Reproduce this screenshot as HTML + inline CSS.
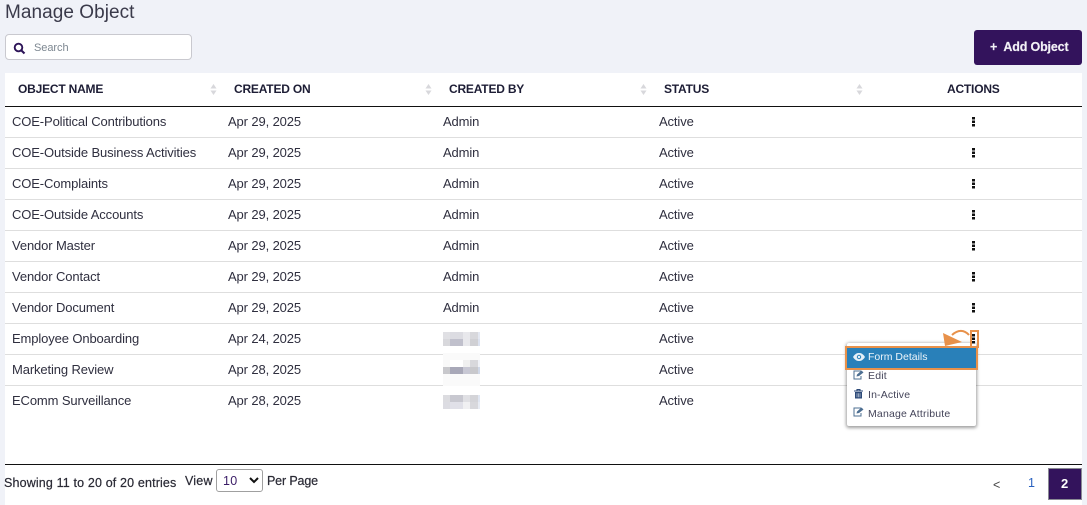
<!DOCTYPE html>
<html><head><meta charset="utf-8"><title>Manage Object</title>
<style>
*{box-sizing:border-box}
html,body{margin:0;padding:0}
body{width:1087px;height:505px;overflow:hidden;background:#f0f2f8;position:relative;font-family:"Liberation Sans",sans-serif;color:#2b2b3a}
.a{position:absolute;white-space:nowrap}
.panel{left:5px;top:73px;width:1077px;height:432px;background:#fff}
.th{top:81px;font-size:12px;line-height:16px;font-weight:bold;color:#1d1d35;letter-spacing:-.2px}
.td{font-size:13px;line-height:16px;letter-spacing:-.12px;color:#2f2f3f}
.sep{left:5px;width:1077px;height:1px;background:#dedede}
.sort{top:84px;width:7px;height:11px}
.dots{left:972px;width:3px;height:10px;background:repeating-linear-gradient(180deg,#111 0 2.4px,transparent 2.4px 3.6px)}
.mi{left:868px;font-size:10.5px;line-height:14px;color:#45455a}
.f{font-size:12.5px;line-height:16px;color:#2a2a35;-webkit-text-stroke:.2px #2a2a35}
</style></head><body>
<div class="a" style="left:5px;top:1px;font-size:19px;line-height:24px;letter-spacing:.05px;color:#3a3a4a">Manage Object</div>
<div class="a" style="left:5px;top:34px;width:187px;height:26px;background:#fff;border:1px solid #c9c9cf;border-radius:4px"></div>
<svg class="a" style="left:13px;top:42px" width="13" height="13" viewBox="0 0 13 13"><circle cx="5.500" cy="5.500" r="3.800" fill="none" stroke="#2d1458" stroke-width="1.900"/><path d="M8.200 8.200L11.500 11.500" stroke="#2d1458" stroke-width="2.100"/></svg>
<div class="a" style="left:34px;top:41px;font-size:11px;line-height:14px;letter-spacing:-.05px;color:#7d8791">Search</div>
<div class="a" style="left:974px;top:30px;width:108px;height:35px;background:#33135c;border-radius:3px"></div>
<div class="a" style="left:990px;top:39px;font-size:12.500px;line-height:16px;font-weight:bold;color:#f2f0f6;letter-spacing:-.15px;-webkit-text-stroke:.15px #f2f0f6">+&nbsp; Add Object</div>
<div class="a panel"></div>
<div class="a th" style="left:18px">OBJECT NAME</div>
<div class="a th" style="left:234px">CREATED ON</div>
<div class="a th" style="left:449px">CREATED BY</div>
<div class="a th" style="left:664px">STATUS</div>
<div class="a th" style="left:947px">ACTIONS</div>
<svg class="a sort" style="left:210px" viewBox="0 0 7 11"><path d="M3.500 0L6.500 4.500H.5zM3.500 11L.5 6.500H6.500z" fill="#d8d8dc"/></svg>
<svg class="a sort" style="left:425px" viewBox="0 0 7 11"><path d="M3.500 0L6.500 4.500H.5zM3.500 11L.5 6.500H6.500z" fill="#d8d8dc"/></svg>
<svg class="a sort" style="left:640px" viewBox="0 0 7 11"><path d="M3.500 0L6.500 4.500H.5zM3.500 11L.5 6.500H6.500z" fill="#d8d8dc"/></svg>
<svg class="a sort" style="left:856px" viewBox="0 0 7 11"><path d="M3.500 0L6.500 4.500H.5zM3.500 11L.5 6.500H6.500z" fill="#d8d8dc"/></svg>
<div class="a" style="left:5px;top:106px;width:1077px;height:1px;background:#111"></div>

<div class="a td" style="left:12px;top:114px">COE-Political Contributions</div><div class="a td" style="left:228px;top:114px">Apr 29, 2025</div><div class="a td" style="left:443px;top:114px">Admin</div><div class="a td" style="left:659px;top:114px">Active</div><div class="a dots" style="top:117px"></div><div class="a sep" style="top:137px"></div>
<div class="a td" style="left:12px;top:145px">COE-Outside Business Activities</div><div class="a td" style="left:228px;top:145px">Apr 29, 2025</div><div class="a td" style="left:443px;top:145px">Admin</div><div class="a td" style="left:659px;top:145px">Active</div><div class="a dots" style="top:148px"></div><div class="a sep" style="top:168px"></div>
<div class="a td" style="left:12px;top:176px">COE-Complaints</div><div class="a td" style="left:228px;top:176px">Apr 29, 2025</div><div class="a td" style="left:443px;top:176px">Admin</div><div class="a td" style="left:659px;top:176px">Active</div><div class="a dots" style="top:179px"></div><div class="a sep" style="top:199px"></div>
<div class="a td" style="left:12px;top:207px">COE-Outside Accounts</div><div class="a td" style="left:228px;top:207px">Apr 29, 2025</div><div class="a td" style="left:443px;top:207px">Admin</div><div class="a td" style="left:659px;top:207px">Active</div><div class="a dots" style="top:210px"></div><div class="a sep" style="top:230px"></div>
<div class="a td" style="left:12px;top:238px">Vendor Master</div><div class="a td" style="left:228px;top:238px">Apr 29, 2025</div><div class="a td" style="left:443px;top:238px">Admin</div><div class="a td" style="left:659px;top:238px">Active</div><div class="a dots" style="top:241px"></div><div class="a sep" style="top:261px"></div>
<div class="a td" style="left:12px;top:269px">Vendor Contact</div><div class="a td" style="left:228px;top:269px">Apr 29, 2025</div><div class="a td" style="left:443px;top:269px">Admin</div><div class="a td" style="left:659px;top:269px">Active</div><div class="a dots" style="top:272px"></div><div class="a sep" style="top:292px"></div>
<div class="a td" style="left:12px;top:300px">Vendor Document</div><div class="a td" style="left:228px;top:300px">Apr 29, 2025</div><div class="a td" style="left:443px;top:300px">Admin</div><div class="a td" style="left:659px;top:300px">Active</div><div class="a dots" style="top:303px"></div><div class="a sep" style="top:323px"></div>
<div class="a td" style="left:12px;top:331px">Employee Onboarding</div><div class="a td" style="left:228px;top:331px">Apr 24, 2025</div><div class="a td" style="left:659px;top:331px">Active</div><div class="a sep" style="top:354px"></div>
<div class="a td" style="left:12px;top:362px">Marketing Review</div><div class="a td" style="left:228px;top:362px">Apr 28, 2025</div><div class="a td" style="left:659px;top:362px">Active</div><div class="a sep" style="top:385px"></div>
<div class="a td" style="left:12px;top:393px">EComm Surveillance</div><div class="a td" style="left:228px;top:393px">Apr 28, 2025</div><div class="a td" style="left:659px;top:393px">Active</div>

<!-- blurred names -->
<div class="a" style="left:443px;top:332px;width:37px;height:7px;background:linear-gradient(90deg,#e0e0e4 0 7px,#dcdce2 7px 20px,#e8e8ec 20px 27px,#d8d8dc 27px 35px,#e4e8f2 35px)"></div>
<div class="a" style="left:443px;top:339px;width:37px;height:7px;background:linear-gradient(90deg,#d8d8dc 0 7px,#c0c0cc 7px 20px,#e8e8ec 20px 27px,#d0d0d4 27px 35px,#dce2f0 35px)"></div>
<div class="a" style="left:443px;top:353px;width:37px;height:33px;background:#fafafa"></div>
<div class="a" style="left:443px;top:360px;width:37px;height:7px;background:linear-gradient(90deg,#f8f8f8 0 7px,#fff 7px 20px,#f0f0f0 20px 27px,#d8d8dc 27px 35px,#f0f2f8 35px)"></div>
<div class="a" style="left:443px;top:367px;width:37px;height:7px;background:linear-gradient(90deg,#c8c8cc 0 7px,#a8a8b8 7px 20px,#c8c8d4 20px 27px,#c8c8cc 27px 35px,#d0d8e8 35px)"></div>
<div class="a" style="left:443px;top:395px;width:37px;height:7px;background:linear-gradient(90deg,#dcdce0 0 7px,#c8c8d0 7px 20px,#e0e0e4 20px 27px,#d4d4d8 27px 35px,#e0e6f2 35px)"></div>
<div class="a" style="left:443px;top:402px;width:37px;height:7px;background:linear-gradient(90deg,#dcdce2 0 7px,#e0e0e8 7px 20px,#f0f0f2 20px 27px,#d8d8dc 27px 35px,#e8ecf4 35px)"></div>

<!-- dropdown -->
<div class="a" style="left:847px;top:343px;width:129px;height:83px;background:#fff;border-radius:2px;box-shadow:0 1px 3px 1px rgba(0,0,0,.38)"></div>
<div class="a" style="left:845px;top:346px;width:133px;height:24px;background:#2980b9;border:2.500px solid #e8914a"></div>
<svg class="a" style="left:853px;top:352px" width="12" height="10" viewBox="0 0 12 10"><path d="M0 5C2 1.800 4 1 6 1s4 .8 6 4c-2 3.200-4 4-6 4S2 8.200 0 5z" fill="#e6f0f8"/><circle cx="6" cy="5" r="2.200" fill="#2980b9"/><circle cx="6" cy="5" r="1.200" fill="#e6f0f8"/></svg>
<div class="a mi" style="top:350px;color:#eef5fa">Form Details</div>
<svg class="a" style="left:853px;top:370px" width="11" height="10" viewBox="0 0 11 10"><path d="M8 1H1v8h7V6" fill="none" stroke="#4d6f92" stroke-width="1"/><path d="M3.500 6.500L4 4.500 8.500.5 10.500 2.500 6 6z" fill="#4d6f92"/></svg>
<div class="a mi" style="top:369px;letter-spacing:.2px">Edit</div>
<svg class="a" style="left:854px;top:389px" width="9" height="10" viewBox="0 0 9 10"><path d="M0 2H9M3 2V.6H6V2" fill="none" stroke="#2d4a78" stroke-width="1.100"/><path d="M1 3H8V9.500H1z" fill="#2d4a78"/><path d="M3 4.200V8.300M4.500 4.200V8.300M6 4.200V8.300" stroke="#dfe6f0" stroke-width=".6"/></svg>
<div class="a mi" style="top:388px;letter-spacing:.15px">In-Active</div>
<svg class="a" style="left:853px;top:407px" width="11" height="10" viewBox="0 0 11 10"><path d="M8 1H1v8h7V6" fill="none" stroke="#4d6f92" stroke-width="1"/><path d="M3.500 6.500L4 4.500 8.500.5 10.500 2.500 6 6z" fill="#4d6f92"/></svg>
<div class="a mi" style="top:407px;letter-spacing:.19px">Manage Attribute</div>

<!-- arrow + highlighted dots -->
<div class="a dots" style="top:334px"></div>
<div class="a" style="left:970px;top:330px;width:9px;height:18px;border:2px solid #e8914a"></div>
<svg class="a" style="left:940px;top:326px" width="32" height="24" viewBox="0 0 32 24"><path d="M29 9C24 3.500 18 3.500 12 9" fill="none" stroke="#e8914a" stroke-width="2"/><path d="M3 7L22 16 5 20z" fill="#e8914a"/></svg>

<!-- footer -->
<div class="a" style="left:5px;top:464px;width:1077px;height:1px;background:#111"></div>
<div class="a f" style="left:4px;top:475px;letter-spacing:.15px">Showing 11 to 20 of 20 entries</div>
<div class="a f" style="left:185px;top:473px;letter-spacing:.2px">View</div>
<div class="a" style="left:216px;top:469px;width:47px;height:23px;background:#fff;border:1px solid #a0a0a0;border-radius:3px"></div>
<div class="a" style="left:223px;top:473px;font-size:12.500px;line-height:16px;letter-spacing:.3px;color:#3a1c66">10</div>
<svg class="a" style="left:249px;top:477px" width="10" height="7" viewBox="0 0 10 7"><path d="M1 1L5 5 9 1" fill="none" stroke="#111" stroke-width="2"/></svg>
<div class="a f" style="left:267px;top:473px;letter-spacing:-.15px">Per Page</div>
<div class="a" style="left:993px;top:477px;font-size:12.500px;line-height:16px;color:#444">&lt;</div>
<div class="a" style="left:1028px;top:475px;font-size:12.500px;line-height:16px;color:#2a62c0">1</div>
<div class="a" style="left:1048px;top:468px;width:34px;height:32px;background:#33135c;border:1px solid #8a8a94"></div>
<div class="a" style="left:1061px;top:476px;font-size:13px;line-height:16px;font-weight:bold;color:#fff">2</div>
</body></html>
